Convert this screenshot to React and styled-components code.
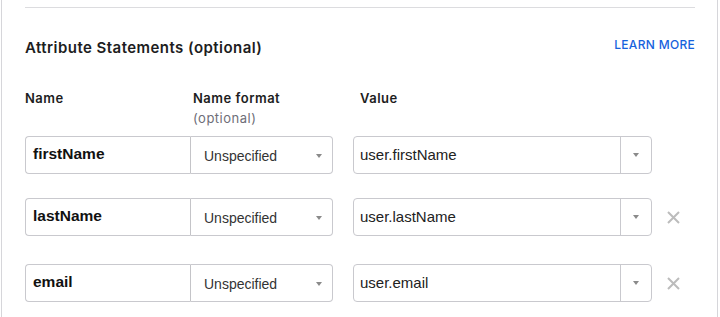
import styled, { createGlobalStyle } from "styled-components";

const GlobalStyle = createGlobalStyle`
  body {
    margin: 0;
    background: #fff;
  }
`;

const Panel = styled.section`
  box-sizing: border-box;
  width: 717px;
  height: 317px;
  margin-left: 1px;
  padding: 7px 22px 0 23px;
  border-left: 1px solid #d6d6da;
  border-right: 1px solid #d6d6da;
  font-family: Inter, "Liberation Sans", sans-serif;
  color: #1d1d21;
`;

const Rule = styled.hr`
  margin: 0;
  border: 0;
  border-top: 1px solid #dcdcdf;
`;

const SectionHeader = styled.div`
  display: flex;
  justify-content: space-between;
  align-items: flex-start;
  margin-top: 30px;
`;

const Title = styled.h2`
  margin: 0;
  font-size: 15px;
  line-height: 20px;
  font-weight: 600;
  letter-spacing: 0.45px;
`;

const LearnMore = styled.a`
  margin-top: -1px;
  font-size: 12px;
  line-height: 16px;
  font-weight: 500;
  letter-spacing: 0.3px;
  color: #1662dd;
  text-decoration: none;
`;

const Grid = styled.div`
  display: grid;
  grid-template-columns: 165px 163px 299px 1fr;
  margin-top: 31px;
`;

const Label = styled.div`
  padding-left: ${(p) => p.$indent || 0}px;
  font-size: 13px;
  line-height: 18px;
  font-weight: 600;
  letter-spacing: 0.5px;
`;

const Hint = styled.div`
  margin-top: 2px;
  font-size: 13px;
  line-height: 18px;
  font-weight: 400;
  letter-spacing: 0.5px;
  color: #6e6e78;
`;

const Row = styled.div`
  display: contents;
`;

const Cell = styled.div`
  display: flex;
  align-items: center;
  margin-top: ${(p) => p.$top}px;
`;

const NameInput = styled.div`
  box-sizing: border-box;
  width: 165px;
  height: 38px;
  display: flex;
  align-items: center;
  padding: 0 0 2px 7px;
  border: 1px solid #c9c9ce;
  border-right: 0;
  border-radius: 4px 0 0 4px;
  font-family: "Liberation Sans", Arial, sans-serif;
  font-size: 15.5px;
  font-weight: 700;
  color: #111;
`;

const Select = styled.div`
  box-sizing: border-box;
  width: 143px;
  height: 38px;
  display: flex;
  align-items: center;
  justify-content: space-between;
  padding: 2px 10px 0 13px;
  border: 1px solid #c9c9ce;
  border-left: 1px solid #c4c4c8;
  border-radius: 0 4px 4px 0;
  font-family: "Liberation Sans", Arial, sans-serif;
  font-size: 14px;
  color: #333;
`;

const Caret = styled.span`
  width: 0;
  height: 0;
  border-left: 3px solid transparent;
  border-right: 3px solid transparent;
  border-top: 4px solid #8a8a8a;
`;

const ValueBox = styled.div`
  box-sizing: border-box;
  width: 299px;
  height: 38px;
  display: flex;
  align-items: stretch;
  border: 1px solid #c9c9ce;
  border-radius: 4px;
  font-family: "Liberation Sans", Arial, sans-serif;
  font-size: 15px;
  color: #222;
`;

const ValueText = styled.div`
  flex: 1;
  display: flex;
  align-items: center;
  padding: 0 0 2px 6px;
  border-right: 1px solid #c9c9ce;
`;

const ValueToggle = styled.div`
  width: 30px;
  display: flex;
  align-items: center;
  justify-content: center;
`;

const Remove = styled.button`
  margin-left: 15px;
  padding: 0;
  border: 0;
  background: none;
  display: flex;
  cursor: pointer;
`;

const RemoveIcon = () => (
  <svg width="13" height="13" viewBox="0 0 13 13">
    <path d="M1 1 12 12M12 1 1 12" stroke="#bcbcbc" strokeWidth="2" />
  </svg>
);

const attributes = [
  { name: "firstName", value: "user.firstName", top: 9, removable: false },
  { name: "lastName", value: "user.lastName", top: 24, removable: true },
  { name: "email", value: "user.email", top: 28, removable: true },
];

export default function App() {
  return (
    <>
      <GlobalStyle />
      <Panel>
        <Rule />
        <SectionHeader>
          <Title>Attribute Statements (optional)</Title>
          <LearnMore href="#">LEARN MORE</LearnMore>
        </SectionHeader>
        <Grid>
          <Label>Name</Label>
          <Label $indent={3}>
            Name format
            <Hint>(optional)</Hint>
          </Label>
          <Label $indent={7}>Value</Label>
          <div />
          {attributes.map((attr) => (
            <Row key={attr.name}>
              <Cell $top={attr.top}>
                <NameInput>{attr.name}</NameInput>
              </Cell>
              <Cell $top={attr.top}>
                <Select>
                  Unspecified
                  <Caret />
                </Select>
              </Cell>
              <Cell $top={attr.top}>
                <ValueBox>
                  <ValueText>{attr.value}</ValueText>
                  <ValueToggle>
                    <Caret />
                  </ValueToggle>
                </ValueBox>
              </Cell>
              <Cell $top={attr.top}>
                {attr.removable && (
                  <Remove aria-label="Remove">
                    <RemoveIcon />
                  </Remove>
                )}
              </Cell>
            </Row>
          ))}
        </Grid>
      </Panel>
    </>
  );
}
